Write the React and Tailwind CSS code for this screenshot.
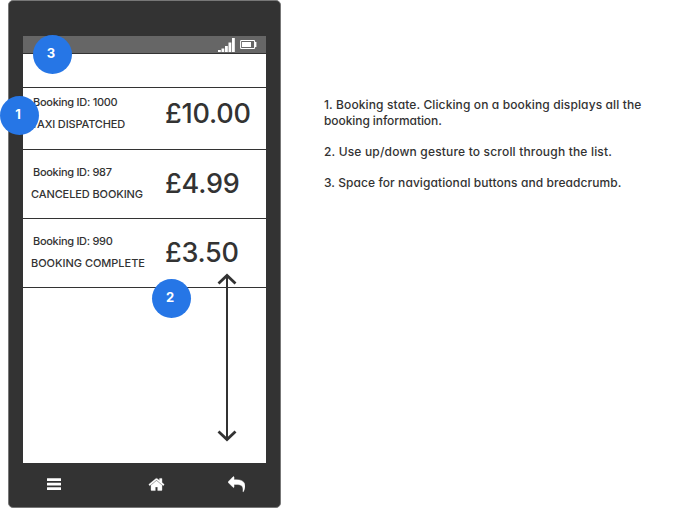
const bookings = [
  {
    id: "Booking ID: 1000",
    state: "TAXI DISPATCHED",
    price: "£10.00",
    row: "h-[62px]",
    idSpacing: "tracking-[-0.28px]",
    stateSpacing: "tracking-[-0.16px]",
    priceSpacing: "tracking-[-0.2px]",
  },
  {
    id: "Booking ID: 987",
    state: "CANCELED BOOKING",
    price: "£4.99",
    row: "h-[69px] pt-[8px]",
    idSpacing: "tracking-[-0.3px]",
    stateSpacing: "tracking-[-0.1px]",
    priceSpacing: "tracking-[-0.2px]",
  },
  {
    id: "Booking ID: 990",
    state: "BOOKING COMPLETE",
    price: "£3.50",
    row: "h-[69px] pt-[8px]",
    idSpacing: "tracking-[-0.3px]",
    stateSpacing: "tracking-[-0.03px]",
    priceSpacing: "tracking-[-0.3px]",
  },
];

function Marker({ place, children }) {
  return (
    <div
      className={
        "absolute flex size-[39px] items-center justify-center rounded-full bg-[#2676e6] pr-[3px] pb-[1px] text-[13px] font-bold text-white " +
        place
      }
    >
      {children}
    </div>
  );
}

function StatusBar() {
  return (
    <div className="flex h-[18px] shrink-0 justify-end border-b border-[#333] bg-[#666] pt-[2px] pr-[9px]">
      <svg width="17" height="14" viewBox="0 0 17 14" fill="#fff">
        <rect x="0" y="12" width="2.8" height="2" />
        <rect x="3.5" y="10.5" width="2.8" height="3.5" />
        <rect x="7" y="8" width="2.8" height="6" />
        <rect x="10.5" y="4.5" width="2.8" height="9.5" />
        <rect x="14" y="0" width="2.8" height="14" />
      </svg>
      <svg className="ml-[5px]" width="17" height="14" viewBox="0 0 17 14">
        <rect x="0.6" y="2.5" width="14" height="8" rx="0.8" fill="none" stroke="#fff" strokeWidth="1.1" />
        <rect x="2" y="4" width="9" height="5" fill="#fff" />
        <rect x="15" y="4" width="1.4" height="5" fill="#fff" />
      </svg>
    </div>
  );
}

function NavBar() {
  return (
    <div className="flex h-[43px] items-center justify-between pr-[21px] pb-[1px] pl-[24px]">
      <svg width="14" height="12" viewBox="0 0 14 12" fill="#fff">
        <rect y="0.2" width="14" height="2.8" rx="0.3" />
        <rect y="4.7" width="14" height="2.8" rx="0.3" />
        <rect y="9.2" width="14" height="2.8" rx="0.3" />
      </svg>
      <svg className="ml-[24px]" width="17" height="17" viewBox="0 0 1792 1792" fill="#fff" stroke="#fff" strokeWidth="40">
        <path d="M1472 992v480q0 26-19 45t-45 19h-384v-384h-256v384h-384q-26 0-45-19t-19-45v-480q0-1 .5-3t.5-3l575-474 575 474q1 2 1 6zm223-69l-62 74q-8 9-21 11h-3q-13 0-21-7l-692-577-692 577q-12 8-24 7-13-2-21-11l-62-74q-8-10-7-23.5t11-21.5l719-599q32-26 76-26t76 26l244 204v-195q0-14 9-23t23-9h192q14 0 23 9t9 23v408l219 182q10 8 11 21.5t-7 23.5z" />
      </svg>
      <svg width="17" height="17" viewBox="0 0 1792 1792" fill="#fff" stroke="#fff" strokeWidth="40">
        <path d="M1792 1120q0 166-127 451-3 7-10.5 24t-13.5 30-13 22q-12 17-28 17-15 0-23.5-10t-8.5-25q0-9 2.5-26.5t2.5-23.5q5-68 5-123 0-101-17.5-181t-48.5-138.5-80-101-105.5-69.5-133-42.5-154-21.5-175.5-6h-224v256q0 26-19 45t-45 19-45-19l-512-512q-19-19-19-45t19-45l512-512q19-19 45-19t45 19 19 45v256h224q713 0 875 403 53 134 53 333z" />
      </svg>
    </div>
  );
}

export default function App() {
  return (
    <div className="relative flex h-[508px] w-[683px] overflow-hidden bg-white font-['Inter','Liberation_Sans',sans-serif] text-[#333] [font-feature-settings:'cv11']">
      <div className="ml-[8px] flex w-[273px] shrink-0 flex-col rounded-[5px] border border-[#777] bg-[#333] px-[14px] pt-[35px]">
        <div className="flex h-[427px] w-[243px] shrink-0 flex-col bg-white">
          <StatusBar />
          <div className="h-[34px] shrink-0 border-b border-[#333]" />
          {bookings.map((b) => (
            <div key={b.id} className={"flex shrink-0 border-b border-[#333] " + b.row}>
              <div className="w-[142px] shrink-0 text-[11px] font-medium whitespace-nowrap text-[#333]">
                <p className={"mt-[6px] ml-[10px] leading-[16px] " + b.idSpacing}>{b.id}</p>
                <p className={"mt-[6px] ml-[8px] leading-[16px] " + b.stateSpacing}>{b.state}</p>
              </div>
              <p className={"mt-[6px] text-[27px] leading-[40px] font-medium whitespace-nowrap " + b.priceSpacing}>{b.price}</p>
            </div>
          ))}
        </div>
        <NavBar />
      </div>

      <div className="mt-[97px] ml-[43px] text-[12px] leading-[16px] font-medium whitespace-nowrap text-[#333]">
        <p className="tracking-[0.12px]">1. Booking state. Clicking on a booking displays all the</p>
        <p className="tracking-[-0.08px]">booking information.</p>
        <p className="mt-[15px] tracking-[0.18px]">2. Use up/down gesture to scroll through the list.</p>
        <p className="mt-[15px] tracking-[0.08px]">3. Space for navigational buttons and breadcrumb.</p>
      </div>

      <svg className="absolute top-[273px] left-[217px]" width="20" height="169" viewBox="0 0 20 169" fill="none" stroke="#333">
        <path d="M10 2V167" strokeWidth="2" />
        <path d="M1.5 10.5L10 2.5L18.5 10.5M1.5 158.5L10 166.5L18.5 158.5" strokeWidth="2.8" />
      </svg>
      <Marker place="left-[33px] top-[35px]">3</Marker>
      <Marker place="left-0 top-[96px]">1</Marker>
      <Marker place="left-[152px] top-[279px]">2</Marker>
    </div>
  );
}
